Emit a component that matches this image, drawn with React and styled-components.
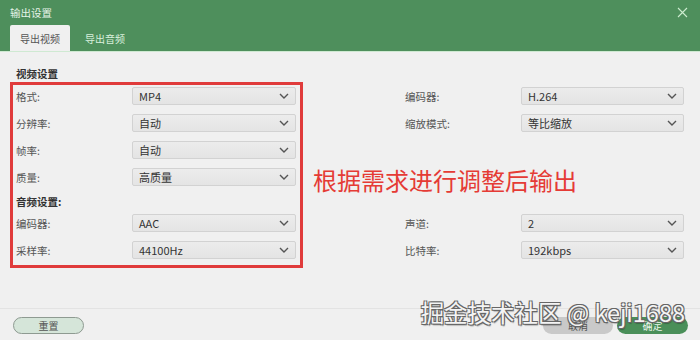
import styled, { createGlobalStyle } from "styled-components";

const GlobalStyle = createGlobalStyle`
  html, body {
    margin: 0;
    padding: 0;
    background: #f0f0f0;
  }
  * {
    box-sizing: border-box;
  }
`;

const FONT = `"Microsoft YaHei", "Noto Sans CJK SC", "Noto Sans", sans-serif`;

const Window = styled.div`
  position: relative;
  width: 700px;
  height: 340px;
  display: flex;
  flex-direction: column;
  background: #f0f0f0;
  font-family: ${FONT};
  overflow: hidden;
`;

const Header = styled.div`
  background: #4e8f5c;
  border-bottom: 1px solid #cfe9d2;
  display: flex;
  flex-direction: column;
`;

const TitleBar = styled.div`
  height: 25px;
  display: flex;
  align-items: center;
  justify-content: space-between;
  padding: 0 10px;
  color: #e6f4e8;
  font-size: 10.5px;
`;

const CloseButton = styled.div`
  width: 12px;
  height: 12px;
  margin-right: 2px;
  display: flex;
  align-items: center;
  justify-content: center;
`;

const TabBar = styled.div`
  height: 26px;
  display: flex;
  align-items: flex-end;
  padding-left: 10px;
`;

const Tab = styled.div`
  height: 26px;
  width: 60px;
  display: flex;
  align-items: center;
  justify-content: center;
  font-size: 10px;
  border-radius: 2px 2px 0 0;
  color: ${(p) => (p.$active ? "#555" : "#d9f0dc")};
  background: ${(p) => (p.$active ? "#f0f0f0" : "transparent")};
  margin-right: ${(p) => (p.$active ? "5px" : "0")};
`;

const Body = styled.div`
  position: relative;
  flex: 1;
  display: flex;
  padding: 12px 16px 0 10px;
  border-bottom: 1px solid #e3e3e3;
`;

const LeftColumn = styled.div`
  width: 293px;
  display: flex;
  flex-direction: column;
`;

const SectionTitle = styled.div`
  height: 18px;
  display: flex;
  align-items: center;
  padding-left: ${(p) => p.$indent || 0}px;
  font-size: 10.5px;
  font-weight: bold;
  color: #333;
  margin: ${(p) => p.$margin || "0"};
`;

const AnnotationBox = styled.div`
  border: 3px solid #e03b3b;
  padding: 2px 4px 6px 3px;
  display: flex;
  flex-direction: column;
`;

const Group = styled.div`
  display: flex;
  flex-direction: column;
  gap: 9px;
  margin-top: ${(p) => p.$top || 0}px;
`;

const RightColumn = styled.div`
  flex: 1;
  margin-left: 102px;
  padding-top: 23px;
  display: flex;
  flex-direction: column;
`;

const Row = styled.div`
  height: 18px;
  display: grid;
  grid-template-columns: 116px 1fr;
  align-items: center;
`;

const Label = styled.div`
  font-size: 10.5px;
  color: #555;
`;

const SelectBox = styled.div`
  height: 18px;
  display: flex;
  align-items: center;
  justify-content: space-between;
  padding: 0 6px 0 6px;
  background: linear-gradient(#ececec, #e4e4e4);
  border: 1px solid #d2d2d2;
  border-radius: 2px;
  font-size: 11px;
  color: #333;
`;

const Annotation = styled.div`
  position: absolute;
  left: 313px;
  top: 114px;
  line-height: 28px;
  font-size: 24px;
  color: #e53b35;
  white-space: nowrap;
`;

const Footer = styled.div`
  height: 31px;
  display: flex;
  justify-content: space-between;
  padding: 8px 12px 0 13px;
`;

const Buttons = styled.div`
  display: flex;
  gap: 4px;
`;

const Button = styled.div`
  height: 17px;
  width: ${(p) => p.$width || 71}px;
  border-radius: 9px;
  display: flex;
  align-items: center;
  justify-content: center;
  font-size: 10px;
  background: ${(p) =>
    p.$kind === "primary" ? "#4a8f59" : p.$kind === "ghost" ? "#d5e5d9" : "#c9c9c9"};
  color: ${(p) => (p.$kind === "primary" ? "#eaf6ec" : "#555")};
  border: ${(p) => (p.$kind === "ghost" ? "1px solid #8e9a91" : "none")};
`;

const Watermark = styled.div`
  position: absolute;
  right: 15px;
  top: 298px;
  line-height: 28px;
  font-size: 23.5px;
  color: #f4f4f4;
  white-space: nowrap;
  text-shadow: -1px -1px 0 #666, 1px -1px 0 #666, -1px 1px 0 #666, 1px 1px 0 #666,
    1px 2px 1px rgba(0, 0, 0, 0.25);
`;

const Chevron = () => (
  <svg width="10" height="6" viewBox="0 0 10 6">
    <polyline points="1,1 5,5 9,1" fill="none" stroke="#555" strokeWidth="1.4" />
  </svg>
);

const Field = ({ label, value }) => (
  <Row>
    <Label>{label}</Label>
    <SelectBox>
      <span>{value}</span>
      <Chevron />
    </SelectBox>
  </Row>
);

const videoFields = [
  ["格式:", "MP4"],
  ["分辨率:", "自动"],
  ["帧率:", "自动"],
  ["质量:", "高质量"],
];

const audioFields = [
  ["编码器:", "AAC"],
  ["采样率:", "44100Hz"],
];

const App = () => {
  return (
    <>
      <GlobalStyle />
      <Window>
        <Header>
          <TitleBar>
            输出设置
            <CloseButton>
              <svg width="11" height="11" viewBox="0 0 11 11">
                <path d="M1 1 L10 10 M10 1 L1 10" stroke="#cdeccf" strokeWidth="1.1" />
              </svg>
            </CloseButton>
          </TitleBar>
          <TabBar>
            <Tab $active>导出视频</Tab>
            <Tab>导出音频</Tab>
          </TabBar>
        </Header>
        <Body>
          <LeftColumn>
            <SectionTitle $indent={6}>视频设置</SectionTitle>
            <AnnotationBox>
              <Group>
                {videoFields.map(([l, v]) => (
                  <Field key={l} label={l} value={v} />
                ))}
              </Group>
              <SectionTitle $margin="6px 0 4px">音频设置:</SectionTitle>
              <Group>
                {audioFields.map(([l, v]) => (
                  <Field key={l} label={l} value={v} />
                ))}
              </Group>
            </AnnotationBox>
          </LeftColumn>
          <RightColumn>
            <Group>
              <Field label="编码器:" value="H.264" />
              <Field label="缩放模式:" value="等比缩放" />
            </Group>
            <Group $top={82}>
              <Field label="声道:" value="2" />
              <Field label="比特率:" value="192kbps" />
            </Group>
          </RightColumn>
          <Annotation>根据需求进行调整后输出</Annotation>
        </Body>
        <Footer>
          <Button $kind="ghost">重置</Button>
          <Buttons>
            <Button $width={70}>取消</Button>
            <Button $kind="primary">确定</Button>
          </Buttons>
        </Footer>
        <Watermark>掘金技术社区 @ keji1688</Watermark>
      </Window>
    </>
  );
};

export default App;
